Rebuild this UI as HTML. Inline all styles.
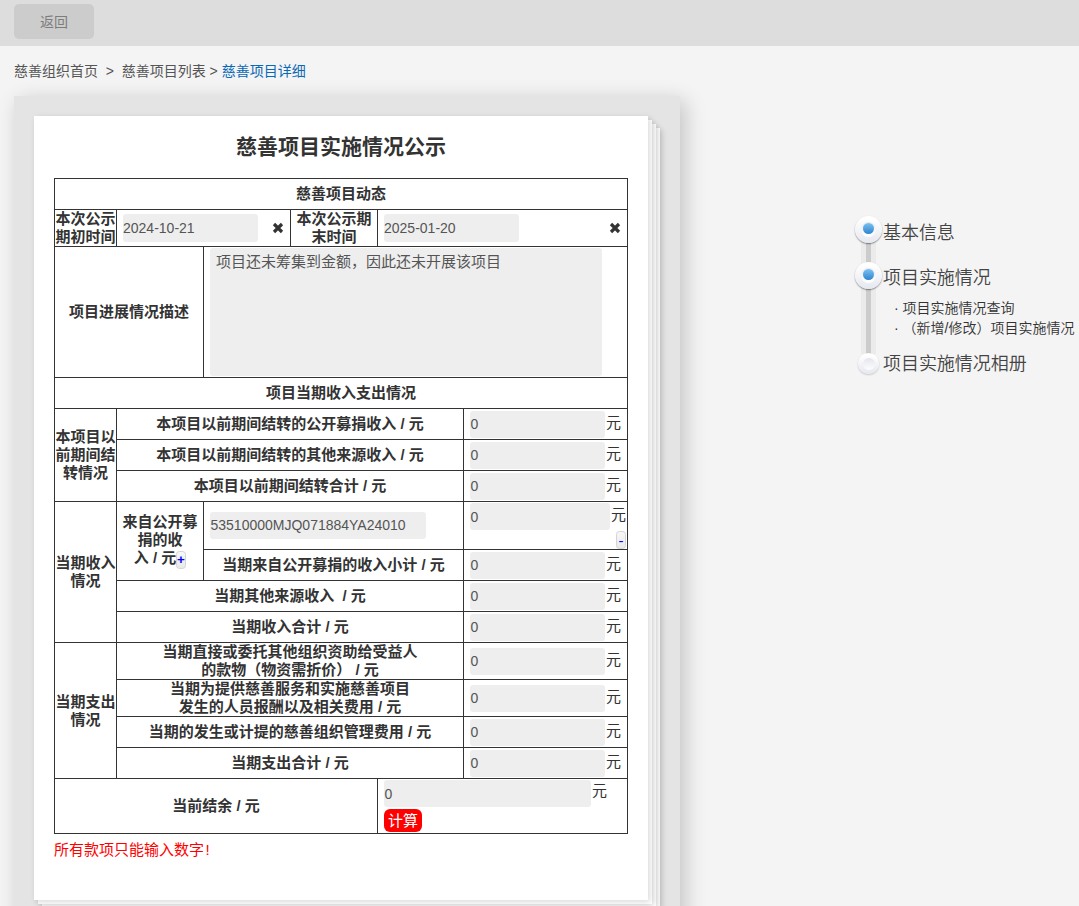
<!DOCTYPE html>
<html lang="zh-CN">
<head>
<meta charset="utf-8">
<title>慈善项目实施情况公示</title>
<style>
*{box-sizing:border-box;margin:0;padding:0}
html,body{width:1079px;height:906px;overflow:hidden}
body{background:#f4f4f4;font-family:"Liberation Sans","Noto Sans CJK SC",sans-serif;color:#333;position:relative}
.topbar{position:absolute;left:0;top:0;width:1079px;height:46px;background:#ddd}
.back{position:absolute;left:14px;top:4px;width:80px;height:35px;border-radius:5px;background:#ccc;color:#7c7c7c;font-size:14px;line-height:37px;text-align:center}
.crumb{position:absolute;left:14px;top:60px;height:22px;line-height:22px;font-size:14px;color:#555;white-space:pre}
.crumb a{color:#0a68b4;text-decoration:none}
.box{position:absolute;left:14px;top:96px;width:666px;height:830px;background:#e4e4e4;box-shadow:5px 5px 20px rgba(0,0,0,.2)}
.pg{position:absolute;background:#fff;width:614px;height:784px;box-shadow:2px 2px 6px rgba(0,0,0,.15)}
.pg4{left:32px;top:32px}
.pg3{left:28px;top:28px}
.pg2{left:24px;top:24px}
.pg1{left:20px;top:20px}
h1{position:absolute;left:0;top:14px;width:614px;text-align:center;font-size:21px;line-height:34px;font-weight:bold;color:#333}
table{position:absolute;left:20px;top:62px;width:573px;border-collapse:collapse;table-layout:fixed}
td{border:1px solid #333;font-size:15px;line-height:18px;font-weight:bold;text-align:center;vertical-align:middle;padding:0;color:#333;position:relative}
tr{height:31px}
.in{display:block;position:absolute;background:#eee;border-radius:3px;height:28px;width:135px;font-size:14px;line-height:28px;font-weight:normal;color:#555;text-align:left;padding-left:0;white-space:nowrap;overflow:hidden}
.in.s{height:27px;line-height:27px;padding-left:.5px}
.yuan{position:absolute;font-weight:normal;font-size:15px;line-height:18px}
.x{position:absolute;width:12px;height:12px}
.note{position:absolute;left:20px;top:724px;font-size:15px;line-height:20px;color:#f00}
.sbtn{position:absolute;background:linear-gradient(#f8f8f8,#e9e9e9);border:1px solid #d4d4d4;border-radius:3.5px;color:#00f;font-weight:bold;font-size:13.33px;text-align:center;overflow:hidden}
.calc{position:absolute;left:6px;top:30px;width:38px;height:23px;background:#f00;border-radius:6px;color:#fff;font-size:15px;line-height:24px;font-weight:normal;text-align:center}
/* nav */
.nav{position:absolute;left:0;top:0}
.track{position:absolute;left:861px;top:235px;width:15px;height:119px;background:#ebebeb}
.track i{position:absolute;left:5px;top:0;width:5px;height:100%;background:#ccc}
.dot{position:absolute;width:27px;height:27px;border-radius:50%;background:linear-gradient(#fff 10%,#e6e8f0);box-shadow:0 1px 1.5px rgba(0,0,0,.45)}
.dot i{position:absolute;left:6px;top:5.5px;width:15px;height:15px;border-radius:50%;background:linear-gradient(#e6e8ef,#fff 85%)}
.dot b{position:absolute;left:8px;top:7px;width:11px;height:11px;border-radius:50%;background:linear-gradient(#78c2f3,#2f84cd)}
.dot.off{width:21px;height:21px;box-shadow:0 1px 2px rgba(0,0,0,.2)}
.dot.off i{left:4.5px;top:4.5px;width:12px;height:12px;background:linear-gradient(#e4e6ee,#fbfbfd 90%)}
.nt{position:absolute;font-size:18px;line-height:24px;color:#444;font-weight:350;letter-spacing:-.05px;white-space:nowrap}
.ns{position:absolute;font-size:14px;line-height:20px;color:#333;font-weight:350;white-space:nowrap}
</style>
</head>
<body>
<div class="topbar"><div class="back">返回</div></div>
<div class="crumb">慈善组织首页  &gt;  慈善项目列表 &gt; <a>慈善项目详细</a></div>
<div class="box">
 <div class="pg pg4"></div><div class="pg pg3"></div><div class="pg pg2"></div>
 <div class="pg pg1">
  <h1>慈善项目实施情况公示</h1>
  <table>
   <colgroup><col style="width:62px"><col style="width:87px"><col style="width:87px"><col style="width:87px"><col style="width:86px"><col style="width:164px"></colgroup>
   <tr style="height:31px"><td colspan="6">慈善项目动态</td></tr>
   <tr style="height:37px"><td>本次公示<br>期初时间</td>
     <td colspan="2"><span class="in" style="left:6px;top:4px">2024-10-21</span><svg class="x" style="left:155px;top:12px" viewBox="0 0 12 12"><path d="M2 2 L10 10 M10 2 L2 10" stroke="#333" stroke-width="3.2" stroke-linecap="butt"/></svg></td>
     <td>本次公示期<br>末时间</td>
     <td colspan="2"><span class="in" style="left:6px;top:4px">2025-01-20</span><svg class="x" style="left:231px;top:12px" viewBox="0 0 12 12"><path d="M2 2 L10 10 M10 2 L2 10" stroke="#333" stroke-width="3.2" stroke-linecap="butt"/></svg></td></tr>
   <tr style="height:131px"><td colspan="2">项目进展情况描述</td>
     <td colspan="4"><span class="in" style="left:6px;top:1px;width:392px;height:128px;line-height:20px;padding:4px 0 0 6px;font-size:15px">项目还未筹集到金额，因此还未开展该项目</span></td></tr>
   <tr><td colspan="6">项目当期收入支出情况</td></tr>
   <tr><td rowspan="3">本项目以<br>前期间结<br>转情况</td><td colspan="4">本项目以前期间结转的公开募捐收入 / 元</td><td><span class="in s" style="left:6px;top:2px">0</span><span class="yuan" style="left:142px;top:5px">元</span></td></tr>
   <tr><td colspan="4">本项目以前期间结转的其他来源收入 / 元</td><td><span class="in s" style="left:6px;top:2px">0</span><span class="yuan" style="left:142px;top:5px">元</span></td></tr>
   <tr><td colspan="4">本项目以前期间结转合计 / 元</td><td><span class="in s" style="left:6px;top:2px">0</span><span class="yuan" style="left:142px;top:5px">元</span></td></tr>
   <tr style="height:48px"><td rowspan="4">当期收入<br>情况</td><td rowspan="2"><div style="padding-bottom:3px">来自公开募<br>捐的收<br>入 / 元<i style="display:inline-block;width:10px"></i></div><span class="sbtn" style="left:59px;top:49px;width:10px;height:18px;line-height:16px">+</span></td>
     <td colspan="3"><span class="in s" style="left:6px;top:10px;width:216px">53510000MJQ071884YA24010</span></td>
     <td><span class="in s" style="left:6px;top:1px;width:140px;line-height:29px">0</span><span class="yuan" style="left:147px;top:4px">元</span><span class="sbtn" style="left:152px;top:29px;width:10px;height:18px;line-height:17px;font-weight:normal;font-size:15px">-</span></td></tr>
   <tr><td colspan="3">当期来自公开募捐的收入小计 / 元</td><td><span class="in s" style="left:6px;top:2px">0</span><span class="yuan" style="left:142px;top:5px">元</span></td></tr>
   <tr><td colspan="4">当期其他来源收入&nbsp; / 元</td><td><span class="in s" style="left:6px;top:2px">0</span><span class="yuan" style="left:142px;top:5px">元</span></td></tr>
   <tr><td colspan="4">当期收入合计 / 元</td><td><span class="in s" style="left:6px;top:2px">0</span><span class="yuan" style="left:142px;top:5px">元</span></td></tr>
   <tr style="height:37px"><td rowspan="4">当期支出<br>情况</td><td colspan="4">当期直接或委托其他组织资助给受益人<br>的款物（物资需折价） / 元</td><td><span class="in s" style="left:6px;top:5px">0</span><span class="yuan" style="left:142px;top:8px">元</span></td></tr>
   <tr style="height:37px"><td colspan="4">当期为提供慈善服务和实施慈善项目<br>发生的人员报酬以及相关费用 / 元</td><td><span class="in s" style="left:6px;top:5px">0</span><span class="yuan" style="left:142px;top:8px">元</span></td></tr>
   <tr><td colspan="4">当期的发生或计提的慈善组织管理费用 / 元</td><td><span class="in s" style="left:6px;top:2px">0</span><span class="yuan" style="left:142px;top:5px">元</span></td></tr>
   <tr><td colspan="4">当期支出合计 / 元</td><td><span class="in s" style="left:6px;top:2px">0</span><span class="yuan" style="left:142px;top:5px">元</span></td></tr>
   <tr style="height:55px"><td colspan="4">当前结余 / 元</td><td colspan="2"><span class="in s" style="left:6px;top:1px;width:207px;line-height:29px">0</span><span class="yuan" style="left:214px;top:3px">元</span><span class="calc">计算</span></td></tr>
  </table>
  <div class="note">所有款项只能输入数字<span style="margin-left:1.5px">!</span></div>
 </div>
</div>
<div class="track"><i></i></div>
<div class="dot" style="left:855px;top:216px"><i></i><b></b></div>
<div class="dot" style="left:855px;top:262px"><i></i><b></b></div>
<div class="dot off" style="left:858px;top:353px"><i></i></div>
<div class="nt" style="left:883px;top:221px">基本信息</div>
<div class="nt" style="left:883px;top:266px">项目实施情况</div>
<div class="ns" style="left:894px;top:298px">· 项目实施情况查询</div>
<div class="ns" style="left:894px;top:318px">· （新增/修改）项目实施情况</div>
<div class="nt" style="left:883px;top:352px">项目实施情况相册</div>
</body>
</html>
